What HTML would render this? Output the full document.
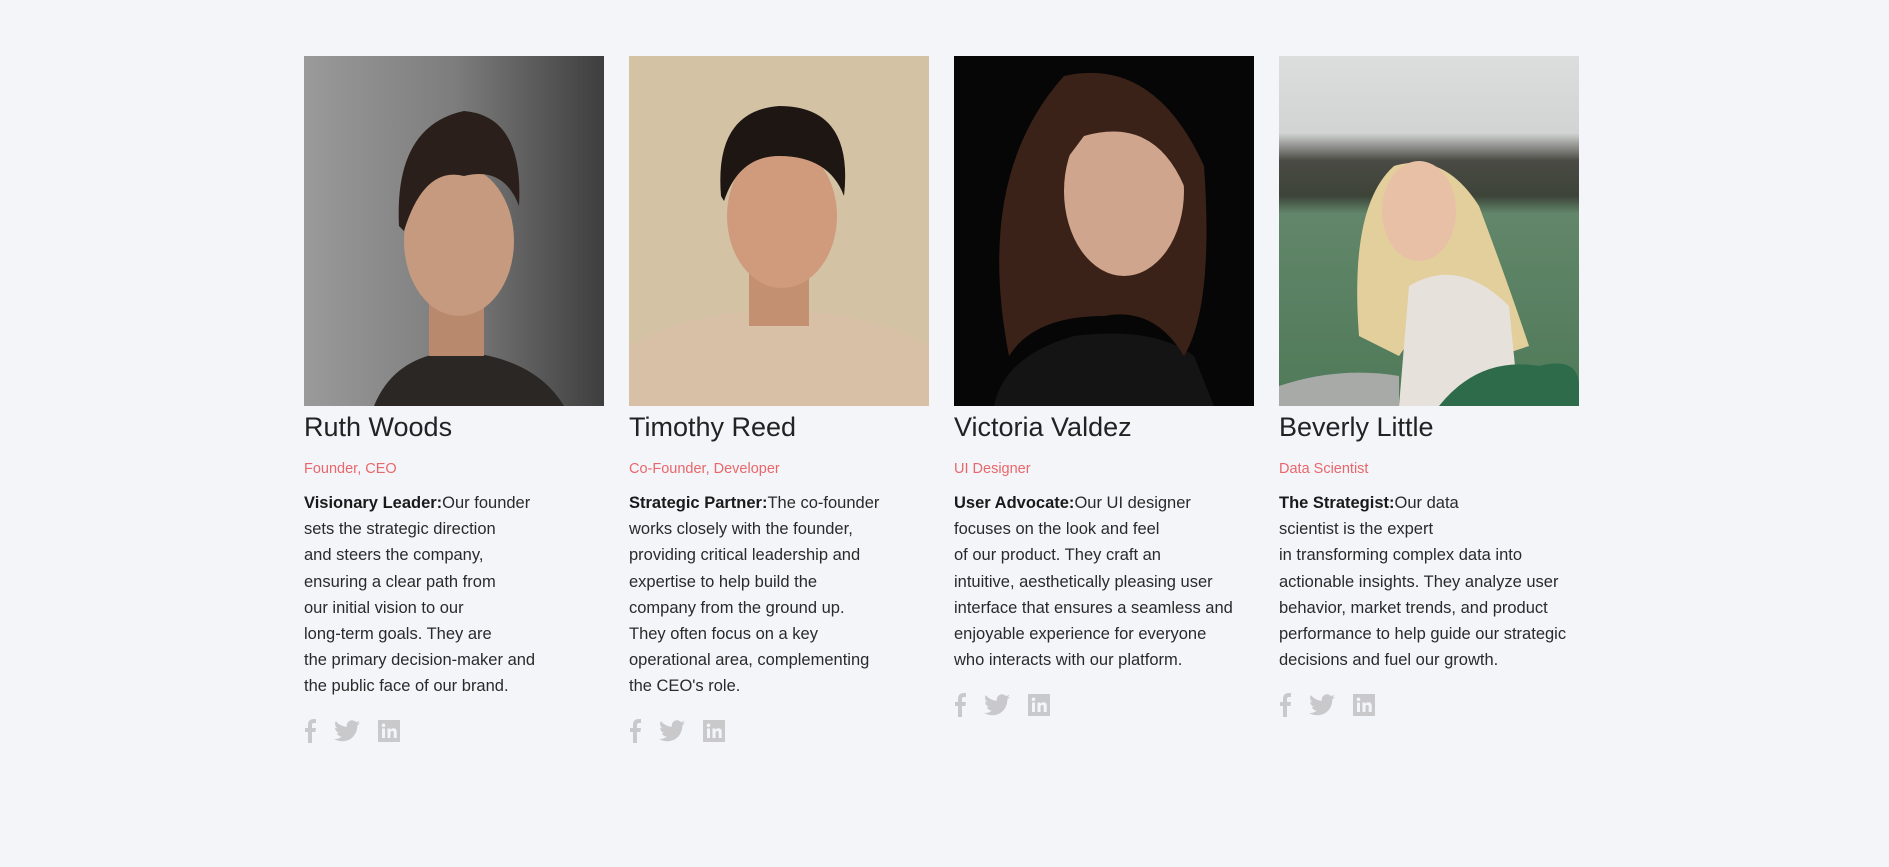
<!DOCTYPE html>
<html><head><meta charset="utf-8"><style>
*{margin:0;padding:0;box-sizing:border-box}
body{width:1889px;height:867px;background:#f4f5f9;font-family:"Liberation Sans",sans-serif;color:#222;position:relative;overflow:hidden}
.col{position:absolute;top:56px;width:330px}
.ph{width:300px;height:350px;display:block}
.name{position:absolute;top:354px;left:0;font-size:27px;line-height:34px;color:#222;white-space:nowrap}
.role{position:absolute;top:404px;left:0;font-size:14.5px;line-height:18px;color:#e8676b;white-space:nowrap}
.bio{position:absolute;top:434px;left:0;font-size:16.5px;line-height:26.2px;color:#2a2a2a;white-space:nowrap}
.bio b{color:#1a1a1a}
.ic{position:absolute;left:0;display:flex;align-items:center}
.ic svg{margin-right:18px}
</style></head><body>

<div class="col" style="left:304px">
<svg class="ph" viewBox="0 0 300 350"><defs><linearGradient id="g1" x1="0" x2="1"><stop offset="0" stop-color="#9a9a9a"/><stop offset=".5" stop-color="#7d7d7d"/><stop offset="1" stop-color="#3e3e3e"/></linearGradient></defs>
<rect width="300" height="350" fill="url(#g1)"/>
<path d="M70 350 Q90 300 150 295 Q230 300 260 350Z" fill="#2b2724"/>
<rect x="125" y="230" width="55" height="70" fill="#b8896d"/>
<ellipse cx="155" cy="185" rx="55" ry="75" fill="#c69a7e"/>
<path d="M95 170 Q90 70 160 55 Q220 60 215 150 Q200 110 160 120 Q120 110 100 175Z" fill="#2a1f1a"/>
</svg>
<div class="name">Ruth Woods</div>
<div class="role">Founder, CEO</div>
<div class="bio"><b>Visionary Leader:</b>Our founder<br>sets the strategic direction<br>and steers the company,<br>ensuring a clear path from<br>our initial vision to our<br>long-term goals. They are<br>the primary decision-maker and<br>the public face of our brand.</div>
<div class="ic" style="top:663px">ICONS</div>
</div>

<div class="col" style="left:629px">
<svg class="ph" viewBox="0 0 300 350"><rect width="300" height="350" fill="#d3c2a3"/>
<path d="M0 350 L0 290 Q60 255 150 255 Q240 255 300 290 L300 350Z" fill="#d8c0a6"/>
<rect x="120" y="200" width="60" height="70" fill="#c49072"/>
<ellipse cx="153" cy="160" rx="55" ry="72" fill="#cf9b7c"/>
<path d="M92 140 Q85 55 150 50 Q225 50 215 140 Q200 100 150 100 Q110 100 95 145Z" fill="#1e1613"/>
</svg>
<div class="name">Timothy Reed</div>
<div class="role">Co-Founder, Developer</div>
<div class="bio"><b>Strategic Partner:</b>The co-founder<br>works closely with the founder,<br>providing critical leadership and<br>expertise to help build the<br>company from the ground up.<br>They often focus on a key<br>operational area, complementing<br>the CEO's role.</div>
<div class="ic" style="top:663px">ICONS</div>
</div>

<div class="col" style="left:954px">
<svg class="ph" viewBox="0 0 300 350"><rect width="300" height="350" fill="#060606"/>
<path d="M40 350 Q50 300 120 280 Q200 270 240 300 L260 350Z" fill="#141414"/>
<path d="M55 300 Q20 120 110 20 Q200 0 250 110 Q260 250 230 300 Q200 250 150 260 Q80 260 55 300Z" fill="#3a2218"/>
<ellipse cx="170" cy="135" rx="60" ry="85" fill="#d0a58d"/>
<path d="M100 120 Q120 30 200 50 Q240 80 230 130 Q200 60 130 80Z" fill="#3a2218"/>
</svg>
<div class="name">Victoria Valdez</div>
<div class="role">UI Designer</div>
<div class="bio"><b>User Advocate:</b>Our UI designer<br>focuses on the look and feel<br>of our product. They craft an<br>intuitive, aesthetically pleasing user<br>interface that ensures a seamless and<br>enjoyable experience for everyone<br>who interacts with our platform.</div>
<div class="ic" style="top:637px">ICONS</div>
</div>

<div class="col" style="left:1279px">
<svg class="ph" viewBox="0 0 300 350"><defs><linearGradient id="g4" x1="0" y1="0" x2="0" y2="1"><stop offset="0" stop-color="#dcdedd"/><stop offset=".22" stop-color="#d2d4d3"/><stop offset=".3" stop-color="#4a4a44"/><stop offset=".4" stop-color="#3d4438"/><stop offset=".45" stop-color="#62866a"/><stop offset="1" stop-color="#4f7a58"/></linearGradient></defs>
<rect width="300" height="350" fill="url(#g4)"/>
<path d="M0 330 Q60 310 120 320 L120 350 L0 350Z" fill="#a8aaa8"/>
<path d="M80 280 Q70 150 115 110 Q165 95 200 150 Q230 230 250 290 L220 300 Q180 210 120 300Z" fill="#e3cf9c"/>
<ellipse cx="140" cy="155" rx="37" ry="50" fill="#e8c0a6"/>
<path d="M120 350 L130 230 Q180 200 230 250 L240 350Z" fill="#e6e1da"/>
<path d="M160 350 Q200 300 260 310 Q300 300 300 330 L300 350Z" fill="#2e6b4a"/>
</svg>
<div class="name">Beverly Little</div>
<div class="role">Data Scientist</div>
<div class="bio"><b>The Strategist:</b>Our data<br>scientist is the expert<br>in transforming complex data into<br>actionable insights. They analyze user<br>behavior, market trends, and product<br>performance to help guide our strategic<br>decisions and fuel our growth.</div>
<div class="ic" style="top:637px">ICONS</div>
</div>

<script>
var s='<svg width="12" height="24" viewBox="0 0 12 24"><path d="M4 24V13H1V9h3V6c0-4 2-6 6-6h2v4h-2c-1.5 0-2 .7-2 2v3h4l-.6 4H8v11z" fill="#c9c9cb"/></svg>'+
'<svg width="26" height="22" viewBox="0 0 24 20"><path d="M24 2.4c-.9.4-1.8.7-2.8.8 1-.6 1.8-1.6 2.2-2.7-1 .6-2 1-3.1 1.2A4.9 4.9 0 0 0 11.9 6.1 14 14 0 0 1 1.7.9a4.9 4.9 0 0 0 1.5 6.6c-.8 0-1.6-.3-2.2-.6 0 2.4 1.7 4.4 3.9 4.8-.7.2-1.5.2-2.200.1.6 2 2.4 3.4 4.6 3.4A9.9 9.9 0 0 1 0 17.3 14 14 0 0 0 7.5 19.5c9.1 0 14-7.5 14-14v-.6c1-.7 1.8-1.6 2.5-2.5z" fill="#c9c9cb"/></svg>'+
'<svg width="22" height="22" viewBox="0 0 22 22"><rect width="22" height="22" fill="#c9c9cb"/><rect x="4" y="8.5" width="3" height="9.5" fill="#f4f5f9"/><circle cx="5.5" cy="5.3" r="1.8" fill="#f4f5f9"/><path d="M9.5 8.5h2.9v1.4c.5-.9 1.6-1.6 3.1-1.6 2.6 0 3.2 1.7 3.2 4V18h-3v-5c0-1.2-.2-2.1-1.4-2.1s-1.8.9-1.8 2.1v5h-3z" fill="#f4f5f9"/></svg>';
document.querySelectorAll('.ic').forEach(function(e){e.innerHTML=s});
</script>
</body></html>
